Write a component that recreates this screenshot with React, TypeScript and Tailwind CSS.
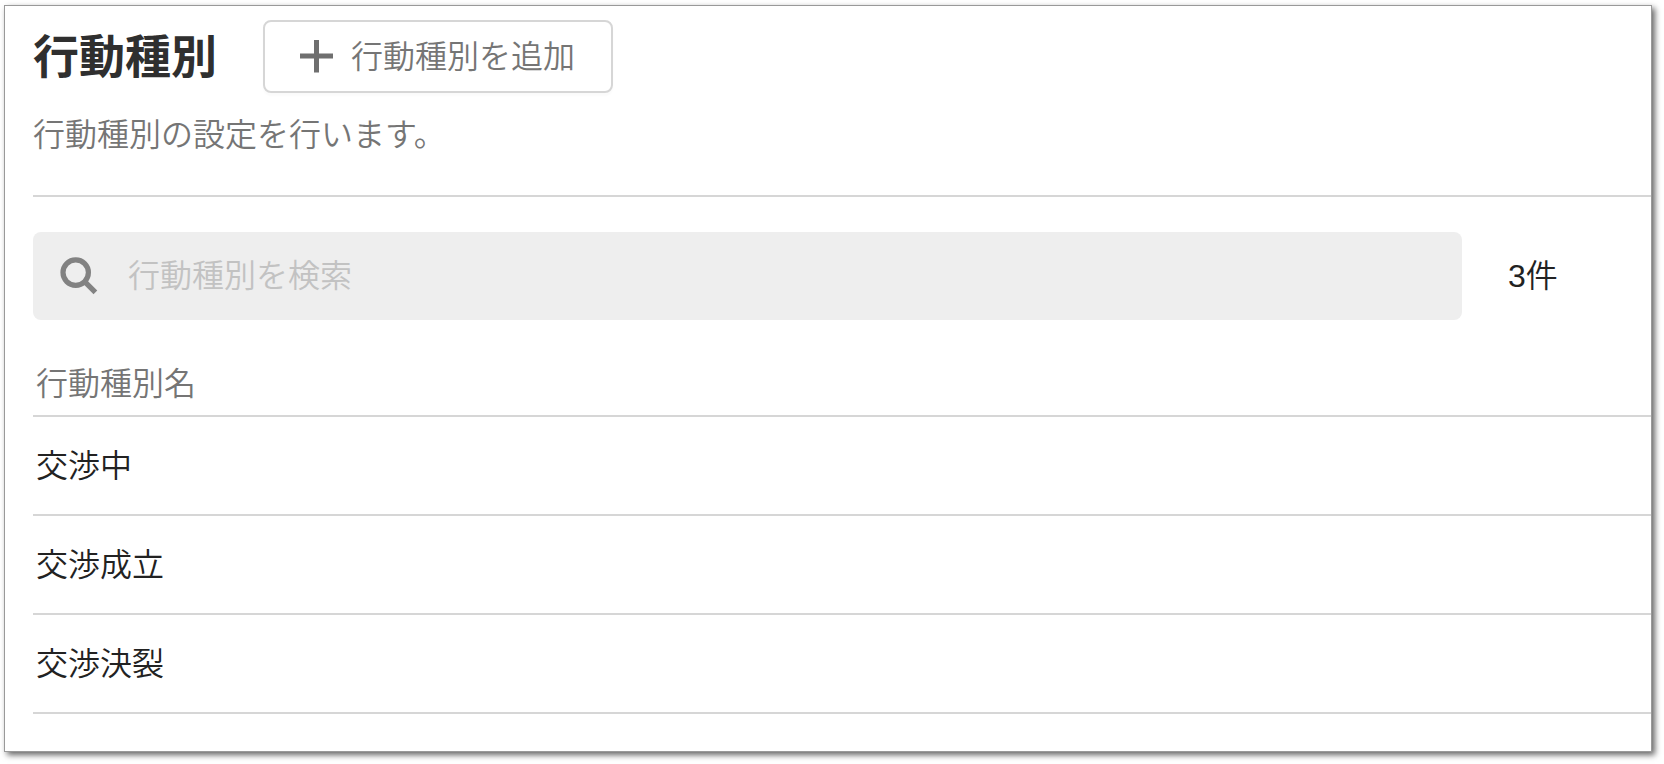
import { useState } from 'react'

interface ActionType {
  id: number
  name: string
}

const ACTION_TYPES: ActionType[] = [
  { id: 1, name: '交渉中' },
  { id: 2, name: '交渉成立' },
  { id: 3, name: '交渉決裂' },
]

function PlusIcon() {
  return (
    <svg viewBox="0 0 34 34" className="w-[34px] h-[34px] shrink-0" fill="none" stroke="#6f6f6f" strokeWidth="5" aria-hidden="true">
      <path d="M16.5 0v32.5M0 16h33" />
    </svg>
  )
}

function SearchIcon() {
  return (
    <svg viewBox="0 0 38 38" className="w-[38px] h-[38px] shrink-0" fill="none" stroke="#828282" aria-hidden="true">
      <circle cx="15.7" cy="15.6" r="12.7" strokeWidth="5.2" />
      <path d="M24.2 24.2l11.2 11.2" strokeWidth="5.2" />
    </svg>
  )
}

export default function App() {
  const [query, setQuery] = useState('')
  const rows = ACTION_TYPES.filter(t => t.name.includes(query))

  return (
    <div className="pt-[5px] pl-1 pr-[12px] pb-[12px] bg-white font-['Liberation_Sans','Noto_Sans_CJK_JP',sans-serif] font-[350] text-[32px] leading-[48px] text-[#222]">
      <main className="border border-[#999] bg-white pl-7 pt-[14px] pb-[37px] shadow-[3px_3px_6px_rgba(0,0,0,0.6)]">
        <header className="border-b-2 border-[#d6d6d6] pb-[36px]">
          <div className="flex items-center gap-[46px]">
            <h1 className="text-[46px] font-bold text-[#2f2f2f]">行動種別</h1>
            <button
              type="button"
              className="flex items-center gap-[17px] h-[73px] pl-[35px] pr-9 rounded-lg border-2 border-[#d6d6d6] bg-white text-[#757575] shadow-[0_3px_2px_rgba(0,0,0,0.02)]"
            >
              <PlusIcon />
              <span>行動種別を追加</span>
            </button>
          </div>
          <p className="mt-[18px] text-[#757575]">行動種別の設定を行います。</p>
        </header>

        <div className="flex items-center mt-[35px]">
          <label className="flex flex-1 items-center gap-[30px] h-[88px] px-[27px] rounded-lg bg-[#eee]">
            <SearchIcon />
            <input
              type="text"
              aria-label="行動種別を検索"
              placeholder="行動種別を検索"
              value={query}
              onChange={e => setQuery(e.target.value)}
              className="flex-1 min-w-0 bg-transparent outline-none placeholder:text-[#c2c2c2]"
            />
          </label>
          <span className="w-[189px] pl-[46px]">{rows.length}件</span>
        </div>

        <table className="w-full border-separate border-spacing-0 text-left">
          <thead>
            <tr>
              <th className="h-[97px] pt-[32px] px-[3px] border-b-2 border-[#d6d6d6] font-[350] text-[#757575]">行動種別名</th>
            </tr>
          </thead>
          <tbody>
            {rows.map(row => (
              <tr key={row.id}>
                <td className="h-[99px] px-[3px] border-b-2 border-[#d6d6d6]">{row.name}</td>
              </tr>
            ))}
          </tbody>
        </table>
      </main>
    </div>
  )
}
